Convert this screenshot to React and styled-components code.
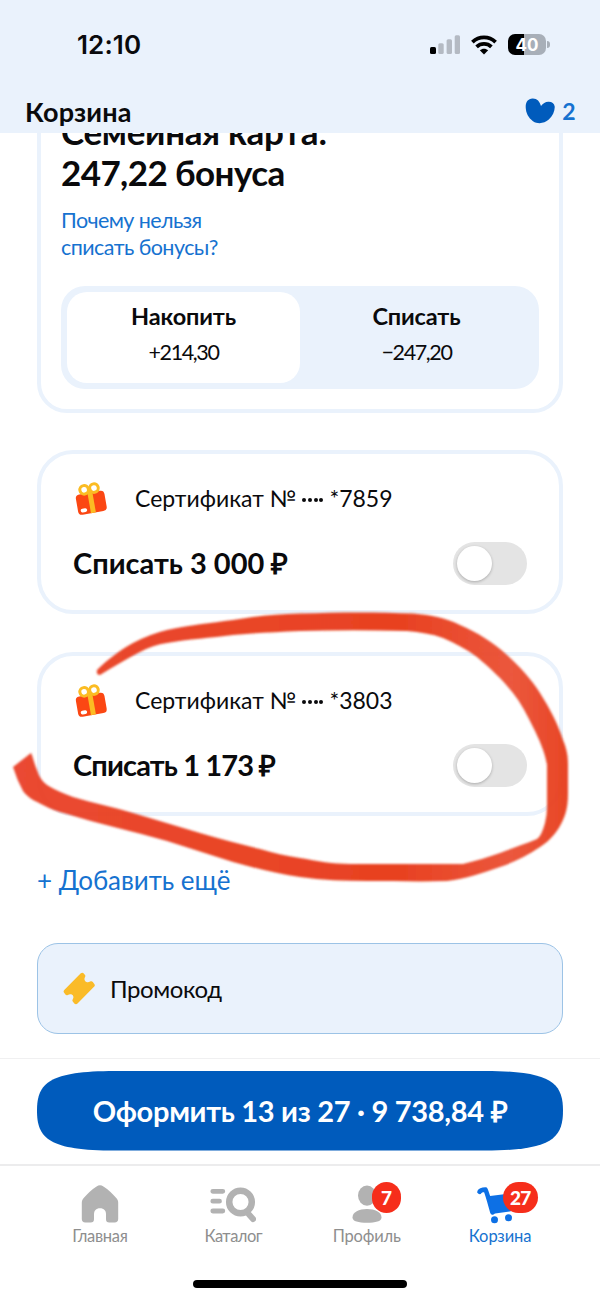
import React, { useState } from 'react';
import styled, { createGlobalStyle } from 'styled-components';

const GlobalStyle = createGlobalStyle`
  * {
    box-sizing: border-box;
  }

  body {
    margin: 0;
    background: #fff;
    color: #0a0a0c;
    font-family: Lato, 'Open Sans', sans-serif;
  }

  button {
    margin: 0;
    padding: 0;
    border: none;
    background: none;
    color: inherit;
    font-family: inherit;
    cursor: pointer;
  }
`;

const Screen = styled.div`
  position: relative;
  display: flex;
  flex-direction: column;
  width: 600px;
  height: 1300px;
  overflow: hidden;
  background: #fff;
`;

const Header = styled.header`
  flex: none;
  height: 133px;
  background: #eaf2fc;
`;

const StatusBar = styled.div`
  display: flex;
  align-items: center;
  justify-content: space-between;
  height: 89px;
  padding: 0 50px 0 77px;
`;

const Time = styled.span`
  font-family: Inter, sans-serif;
  font-size: 26px;
  font-weight: 600;
  letter-spacing: 0.1px;
`;

const StatusIcons = styled.div`
  display: flex;
  align-items: center;
  gap: 11px;
`;

const TitleBar = styled.div`
  display: flex;
  align-items: center;
  justify-content: space-between;
  height: 44px;
  padding: 0 25px;
`;

const PageTitle = styled.h1`
  margin: 0;
  font-size: 27px;
  font-weight: 700;
  line-height: 43px;
  letter-spacing: 0.2px;
`;

const Favorites = styled.button`
  display: flex;
  align-items: center;
  gap: 7px;
  color: #1672d0;
  font-size: 23px;
  font-weight: 700;
  letter-spacing: -0.7px;
`;

const Content = styled.main`
  flex: none;
  display: flex;
  flex-direction: column;
  justify-content: flex-end;
  height: 925px;
  padding: 0 37px 24px;
  overflow: hidden;
`;

const Card = styled.section`
  flex: none;
  border: 4px solid #eaf2fc;
  border-radius: 36px;
  background: #fff;
`;

const BonusCard = styled(Card)`
  padding: 20px 20px 20px;
  margin-bottom: 37px;
  border-radius: 30px;
`;

const BonusTitle = styled.h2`
  margin: 0 0 14px;
  font-size: 35px;
  font-weight: 700;
  line-height: 41px;
`;

const Line = styled.span`
  display: block;
  letter-spacing: ${({ $spacing }) => $spacing || 0}px;
`;

const HelpLink = styled.a`
  display: block;
  margin-bottom: 25px;
  color: #1672d0;
  font-size: 21.5px;
  line-height: 27px;
  text-decoration: none;
`;

const Segment = styled.div`
  display: grid;
  grid-template-columns: 1fr 1fr;
  height: 103px;
  padding: 6px;
  border-radius: 24px;
  background: #eaf2fc;
`;

const SegmentItem = styled.button`
  display: flex;
  flex-direction: column;
  align-items: center;
  padding-top: 6px;
  border-radius: 20px;
  background: ${({ $active }) => ($active ? '#fff' : 'transparent')};
`;

const SegmentLabel = styled.span`
  font-size: 23.5px;
  font-weight: 700;
  line-height: 36px;
  letter-spacing: -0.15px;
`;

const SegmentValue = styled.span`
  font-size: 21.5px;
  line-height: 37px;
  letter-spacing: -1.4px;
`;

const CertificateCard = styled(Card)`
  height: 164px;
  margin-bottom: 38px;
  padding: 24px 32px 0 32px;
`;

const CertificateRow = styled.div`
  display: flex;
  align-items: center;
  height: 40px;
`;

const CertificateName = styled.span`
  display: flex;
  align-items: center;
  margin-left: 26px;
  font-size: 23px;
`;

const Dots = styled.span`
  display: flex;
  gap: 1.7px;
  margin: 3px 6px 0;
`;

const Dot = styled.i`
  width: 4px;
  height: 4px;
  border-radius: 50%;
  background: #0a0a0c;
`;

const AmountRow = styled.div`
  display: flex;
  align-items: center;
  justify-content: space-between;
  margin-top: 24px;
`;

const Amount = styled.span`
  margin-bottom: 2px;
  font-size: 29px;
  font-weight: 700;
  line-height: 41px;
  letter-spacing: ${({ $spacing }) => $spacing || 0}px;
`;

const Toggle = styled.button`
  display: flex;
  align-items: center;
  justify-content: ${({ $on }) => ($on ? 'flex-end' : 'flex-start')};
  width: 74px;
  height: 43px;
  padding: 0 4px;
  border-radius: 22px;
  background: ${({ $on }) => ($on ? '#005bbc' : '#e4e4e4')};
`;

const Knob = styled.span`
  width: 35px;
  height: 35px;
  border-radius: 50%;
  background: #fff;
  box-shadow: 0 1px 3px rgba(0, 0, 0, 0.25);
`;

const AddLink = styled.button`
  align-self: flex-start;
  height: 40px;
  margin: 6px 0 43px;
  color: #1672d0;
  font-size: 26px;
  line-height: 40px;
  letter-spacing: -0.05px;
`;

const PromoField = styled.button`
  flex: none;
  display: flex;
  align-items: center;
  gap: 14px;
  height: 91px;
  padding: 0 25px;
  border: 1.5px solid #9cc3e6;
  border-radius: 21px;
  background: #eaf2fc;
  font-size: 24px;
  letter-spacing: -0.4px;
`;

const CheckoutBar = styled.div`
  flex: none;
  height: 106px;
  padding: 12px 37px 0;
  border-top: 1px solid #f0f0f1;
`;

/* squircle ends, rounder than a border-radius can give */
const CheckoutButton = styled.button`
  width: 526px;
  height: 80px;
  padding-bottom: 2px;
  clip-path: path(
    'M0 39.700C0 12 12 0 78 0H448C514 0 526 12 526 39.700C526 67.500 514 79.500 448 79.500H78C12 79.500 0 67.500 0 39.700Z'
  );
  background: #005bbc;
  color: #fff;
  font-size: 29px;
  font-weight: 700;
  white-space: nowrap;
  letter-spacing: -0.3px;
`;

const TabBar = styled.nav`
  flex: none;
  display: grid;
  grid-template-columns: repeat(4, 133.4px);
  justify-content: center;
  height: 112px;
  padding-top: 19px;
  border-top: 2px solid #ececed;
`;

const Tab = styled.a`
  display: flex;
  flex-direction: column;
  align-items: center;
  color: ${({ $active }) => ($active ? '#1672d0' : '#8e8e8e')};
  font-size: 16.5px;
  line-height: 24px;
  letter-spacing: ${({ $spacing }) => $spacing || 0}px;
`;

const TabIcon = styled.span`
  position: relative;
  height: 39px;
`;

const TabBadge = styled.span`
  position: absolute;
  top: -3px;
  left: ${({ $left }) => $left}px;
  min-width: 29px;
  height: 31px;
  padding: 0 7px;
  border-radius: 16px;
  background: #f62e1b;
  color: #fff;
  font-size: 19px;
  font-weight: 900;
  line-height: 31px;
  letter-spacing: -0.8px;
  text-align: center;
`;

const HomeIndicator = styled.div`
  flex: none;
  width: 214px;
  height: 8px;
  margin: 4px auto 0;
  border-radius: 4px;
  background: #000;
`;

const MarkerLayer = styled.svg`
  position: absolute;
  top: 600px;
  left: 0;
  pointer-events: none;
`;

const SignalIcon = () => (
  <svg width="30" height="20" viewBox="0 0 30 20">
    <rect x="0" y="12" width="6" height="7" rx="1.5" fill="#000" />
    <rect x="8.3" y="8.3" width="5.4" height="10.7" rx="1.5" fill="#b4bac3" />
    <rect x="16.6" y="4.3" width="5.4" height="14.7" rx="1.5" fill="#b4bac3" />
    <rect x="24.7" y="0.3" width="5.3" height="18.7" rx="1.5" fill="#b4bac3" />
  </svg>
);

const WifiIcon = () => (
  <svg width="26" height="20" viewBox="0 0 26 20">
    <g fill="none" stroke="#000" strokeWidth="3.8">
      <path d="M1.4 7.1C8 .9 18 .9 24.6 7.1" />
      <path d="M5.6 11.8C9.8 7.9 16.2 7.9 20.4 11.8" />
    </g>
    <path d="M8.8 15.300c2.400-2.100 6-2.100 8.400 0L13 19.400Z" fill="#000" />
  </svg>
);

const Battery = styled.div`
  position: relative;
  display: flex;
  align-items: center;
  justify-content: center;
  width: 38px;
  height: 21px;
  margin-right: 4px;
  border-radius: 7px;
  background: linear-gradient(90deg, #000 41%, #a8afb8 41%);
  color: #fff;
  font-family: Inter, sans-serif;
  font-size: 17px;
  font-weight: 700;

  &::after {
    content: '';
    position: absolute;
    right: -3.5px;
    top: 7px;
    width: 2.5px;
    height: 7px;
    border-radius: 0 4px 4px 0;
    background: #a8afb8;
  }
`;

const HeartIcon = () => (
  <svg width="30" height="26" viewBox="0 0 30 26">
    <path
      d="M7.500.4C3 .6.5 4 .7 9.300.9 15 3.500 20 8 23.200c5 3.300 11.300 2.300 15.800-1.600C27.800 18 30 12.500 29.700 8.500 29.300 5.300 26.700 3.500 23.300 3.700c-3 .2-5.300 1.500-7.300 4.300C14.700 3.300 12 .2 7.500.4Z"
      fill="#005bbc"
    />
  </svg>
);

const GiftIcon = () => (
  <svg width="36" height="36" viewBox="0 0 36 36">
    <g transform="rotate(-10 18 20)">
      <rect x="3.3" y="12.5" width="29" height="20.5" rx="4" fill="#fb4713" />
      <g fill="none" stroke="#fbbc23" strokeWidth="3">
        <circle cx="13" cy="8.8" r="4.3" />
        <circle cx="23" cy="8.8" r="4.3" />
      </g>
      <path d="M15.7 10.500h5V33h-5z" fill="#fbbc23" />
      <rect x="6" y="27" width="6.5" height="3.8" rx="1.9" fill="#fff" />
    </g>
  </svg>
);

const TicketIcon = () => (
  <svg width="33" height="34" viewBox="0 0 33 34">
    <path
      d="M17.800 1.200c1-.8 2.200-.7 3 .2l1.200 1.500c.6.800.400 1.500-.1 2.400-1 2-.3 4 1.500 4.700 1.300.5 2.500.3 3.700-.4 1.100-.6 2-.4 2.700.4l1.500 1.900c.8 1 .7 2-.3 2.900L14.500 31.600c-1 .9-2.400.8-3.200-.200l-1.500-1.800c-.6-.8-.5-1.600.1-2.500 1.100-1.800.5-3.700-1.100-4.500-1.300-.700-2.600-.5-3.900.3-1 .6-1.900.4-2.500-.4L1.100 20.700c-.8-1.100-.6-2.200.4-3Z"
      fill="#fabb28"
    />
  </svg>
);

const HomeIcon = () => (
  <svg width="38" height="38" viewBox="0 0 38 38" fill="#b2b2b2">
    <path d="M15.600 1.400c2.200-1.500 4.600-1.500 6.800 0 5 3.300 9.500 7.300 13.300 12.100 1 1.300 1.500 2.600 1.500 4.300V34c0 2.200-1.300 3.500-3.500 3.500h-5.500c-2 0-3.200-1.100-3.200-3.200v-5c0-3.700-2-6.100-6-6.100s-6 2.400-6 6.100v5c0 2.100-1.200 3.200-3.200 3.200H4.300C2 37.500.8 36.200.8 34V17.800c0-1.700.5-3 1.500-4.300C6.100 8.700 10.600 4.700 15.600 1.400Z" />
  </svg>
);

const CatalogIcon = () => (
  <svg width="46" height="38" viewBox="0 0 46 38" fill="none" stroke="#b2b2b2">
    <path d="M2.800 6.300h10M2.800 16.200h6.700M2.800 26h10" strokeWidth="4.8" strokeLinecap="round" />
    <circle cx="30.500" cy="17" r="11.300" strokeWidth="6.5" />
    <path d="M39 29.500l4 4.500" strokeWidth="6" strokeLinecap="round" />
  </svg>
);

const ProfileIcon = () => (
  <svg width="30" height="38" viewBox="0 0 30 38" fill="#b2b2b2">
    <ellipse cx="15" cy="10.6" rx="9" ry="10.2" />
    <path d="M15 24c8 0 14.500 3 14.500 8.500 0 4-6 5.200-14.500 5.200S.5 36.500.5 32.500C.5 27 7 24 15 24Z" />
  </svg>
);

const CartIcon = () => (
  <svg width="48" height="40" viewBox="0 0 48 40" fill="#0d70e5">
    <path
      d="M3.500 6.800c1-1.800 2.600-2 6-2.200C11.500 9 14.400 20 16.500 27.500"
      fill="none"
      stroke="#0d70e5"
      strokeWidth="4.6"
      strokeLinecap="round"
      strokeLinejoin="round"
    />
    <path d="M12 11.300 41 7.500l-4.700 16.800c-.4 1.500-1.200 2.100-2.700 2.300L15.500 29Z" />
    <circle cx="18.500" cy="34.800" r="3.500" />
    <circle cx="32.500" cy="32.800" r="3.500" />
  </svg>
);

const Marker = () => (
  <MarkerLayer width="600" height="300" viewBox="0 600 600 300">
    <defs>
      <linearGradient id="marker" x1="0" y1="0" x2="1" y2="0">
        <stop offset="0" stopColor="#e9422a" />
        <stop offset="0.35" stopColor="#e83f1f" />
        <stop offset="0.7" stopColor="#e73a18" />
        <stop offset="0.9" stopColor="#ea5035" />
        <stop offset="1" stopColor="#e73e1b" />
      </linearGradient>
      <filter id="soft" x="-5%" y="-5%" width="110%" height="110%">
        <feGaussianBlur stdDeviation="0.8" />
      </filter>
    </defs>
    <path
      d="M97 670C107 660 120 650 133 643Q150 634 167 630C190 625 210 623 233 620C257 616 277 614 300 613.500
        C340 612 380 612 413 613.500C432 615 446 618 460 625C478 633 493 642 507 655C520 667 531 679 540 693
        C550 709 558 724 563 740C567 750 568 756 568 765V793C568 803 567 811 563 820C558 831 551 840 540 847
        C528 855 515 862 500 867C482 873 466 879 447 881C420 882 393 881 367 881C345 881 322 880 300 877
        C277 874 255 868 233 862L167 841C133 831 98 824 67 814Q54 811 43 805C35 801 28 798 23 791
        Q17 780 13 767L31 753C33 757 34 763 37 770Q40 780 47 785C55 790 63 793 73 797
        C93 803 113 807 133 813L200 833C220 839 240 844 260 849C273 853 286 856 300 858
        C317 861 333 864 350 864H463C476 861 488 857 500 853C513 848 525 844 537 839
        C541 836 543 830 545 823Q547 815 547 807V765C545 752 539 739 533 727C527 715 521 703 513 693
        C502 679 490 668 477 657C466 649 455 643 443 638C432 634 420 632 407 631C371 630 336 630 300 631
        C277 632 255 633 233 635C211 638 188 639 167 643Q153 645 140 652C126 659 113 667 100 675Q96 675 97 670Z"
      fill="url(#marker)"
      fillOpacity="0.96"
      filter="url(#soft)"
    />
  </MarkerLayer>
);

const Certificate = ({ number, amount, amountSpacing }) => {
  const [on, setOn] = useState(false);

  return (
    <CertificateCard>
      <CertificateRow>
        <GiftIcon />
        <CertificateName>
          Сертификат №
          <Dots>
            <Dot />
            <Dot />
            <Dot />
            <Dot />
          </Dots>
          *{number}
        </CertificateName>
      </CertificateRow>
      <AmountRow>
        <Amount $spacing={amountSpacing}>Списать {amount} ₽</Amount>
        <Toggle $on={on} onClick={() => setOn(!on)} aria-label="Списать">
          <Knob />
        </Toggle>
      </AmountRow>
    </CertificateCard>
  );
};

const App = () => {
  const [mode, setMode] = useState('save');

  return (
    <Screen>
      <GlobalStyle />
      <Header>
        <StatusBar>
          <Time>12:10</Time>
          <StatusIcons>
            <SignalIcon />
            <WifiIcon />
            <Battery>40</Battery>
          </StatusIcons>
        </StatusBar>
        <TitleBar>
          <PageTitle>Корзина</PageTitle>
          <Favorites>
            <HeartIcon />2
          </Favorites>
        </TitleBar>
      </Header>

      <Content>
        <BonusCard>
          <BonusTitle>
            <Line $spacing={-0.3}>Семейная карта:</Line>
            <Line $spacing={-0.6}>247,22 бонуса</Line>
          </BonusTitle>
          <HelpLink>
            <Line $spacing={-0.6}>Почему нельзя</Line>
            <Line $spacing={-0.55}>списать бонусы?</Line>
          </HelpLink>
          <Segment>
            <SegmentItem $active={mode === 'save'} onClick={() => setMode('save')}>
              <SegmentLabel>Накопить</SegmentLabel>
              <SegmentValue>+214,30</SegmentValue>
            </SegmentItem>
            <SegmentItem $active={mode === 'spend'} onClick={() => setMode('spend')}>
              <SegmentLabel>Списать</SegmentLabel>
              <SegmentValue>−247,20</SegmentValue>
            </SegmentItem>
          </Segment>
        </BonusCard>

        <Certificate number="7859" amount="3 000" />
        <Certificate number="3803" amount="1 173" amountSpacing={-0.85} />

        <AddLink>+ Добавить ещё</AddLink>

        <PromoField>
          <TicketIcon />
          Промокод
        </PromoField>
      </Content>

      <CheckoutBar>
        <CheckoutButton>Оформить 13 из 27 · 9 738,84 ₽</CheckoutButton>
      </CheckoutBar>

      <TabBar>
        <Tab $spacing={-0.3}>
          <TabIcon>
            <HomeIcon />
          </TabIcon>
          Главная
        </Tab>
        <Tab $spacing={-0.5}>
          <TabIcon>
            <CatalogIcon />
          </TabIcon>
          Каталог
        </Tab>
        <Tab $spacing={-0.2}>
          <TabIcon>
            <ProfileIcon />
            <TabBadge $left={20}>7</TabBadge>
          </TabIcon>
          Профиль
        </Tab>
        <Tab $active $spacing={-0.1}>
          <TabIcon>
            <CartIcon />
            <TabBadge $left={27}>27</TabBadge>
          </TabIcon>
          Корзина
        </Tab>
      </TabBar>
      <HomeIndicator />
      <Marker />
    </Screen>
  );
};

export default App;
